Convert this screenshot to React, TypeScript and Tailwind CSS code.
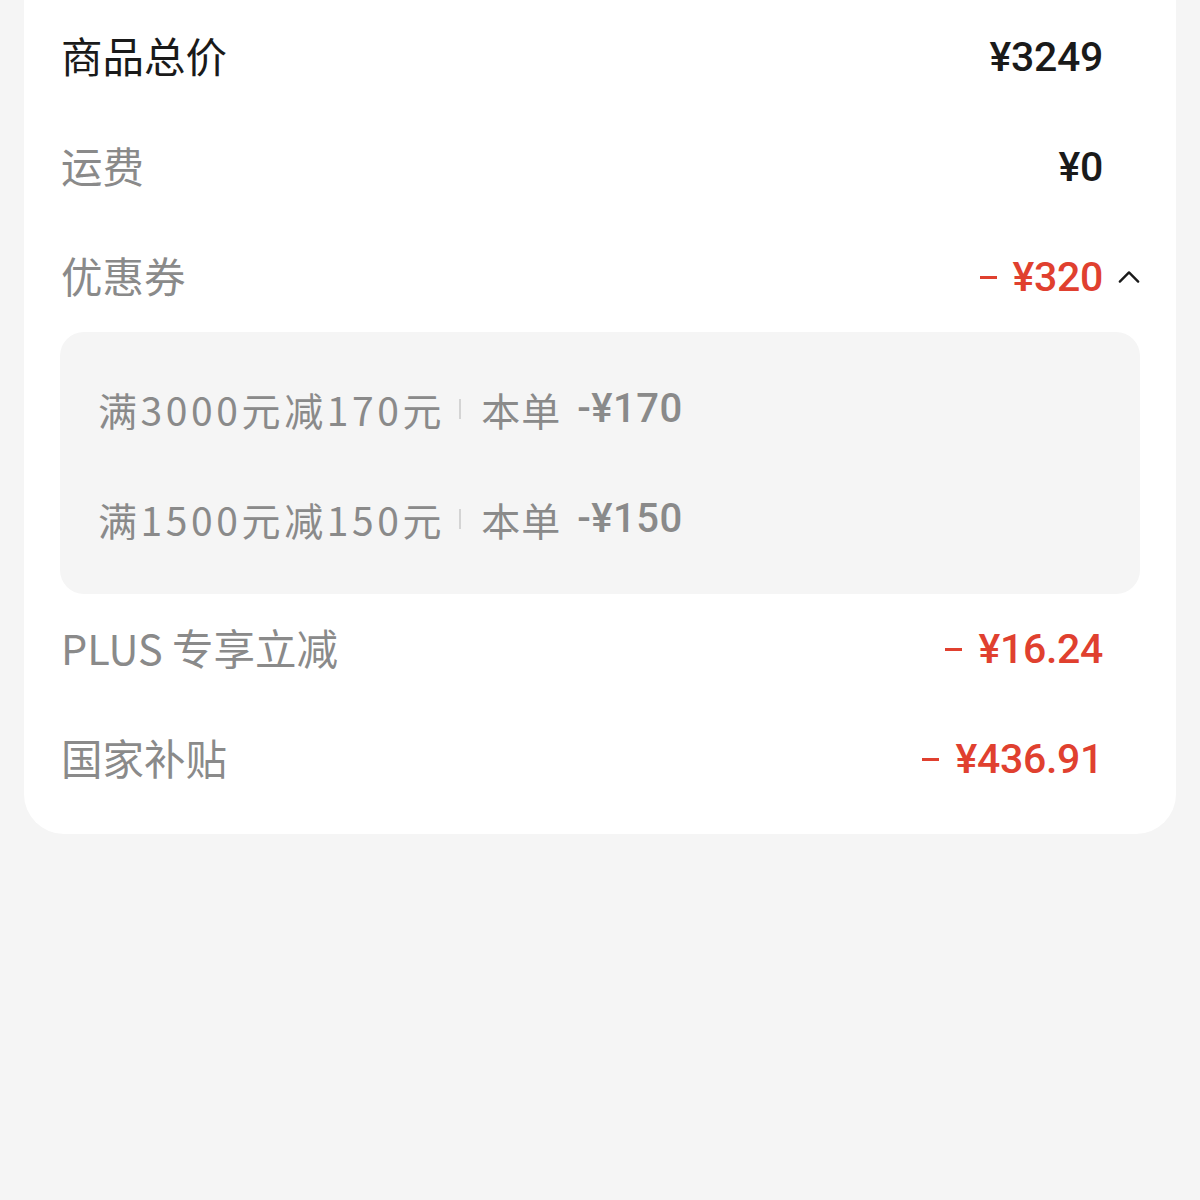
import React from "react";

const cjk = { fontFamily: '"Noto Sans CJK SC", "Noto Sans", sans-serif' };
const num = { fontFamily: 'Roboto, "Noto Sans CJK SC", sans-serif' };

function Value({ value, red }: { value: string; red?: boolean }) {
  const neg = value.startsWith("-");
  const v = neg ? value.slice(2) : value;
  return (
    <span style={num} className={`flex items-center text-[41px] leading-none font-medium tracking-[-0.3px] ${red ? "text-[#e0402f]" : "text-[#1a1a1a]"}`}>
      {neg && <span className={`inline-block w-[17px] h-[3px] mr-[16px] ${red ? "bg-[#e0402f]" : "bg-[#1a1a1a]"}`} />}
      {v}
    </span>
  );
}

function Row({ label, value, dark, red, chevron }: { label: string; value: string; dark?: boolean; red?: boolean; chevron?: boolean }) {
  return (
    <div className="h-[110px] flex items-center justify-between pl-[1px] pr-[37px]">
      <span style={cjk} className={`text-[41.5px] leading-none mt-[-3px] ${dark ? "text-[#1a1a1a]" : "text-[#8a8a8a]"}`}>{label}</span>
      <div className="flex items-center">
        <Value value={value} red={red} />
        {chevron && (
          <div className="w-[37px] mr-[-37px] pl-[15px] flex items-center">
            <svg width="24" height="14" viewBox="0 0 24 14" fill="none">
              <path d="M2 12 L12 2 L22 12" stroke="#1a1a1a" strokeWidth="2.6" strokeLinecap="round" strokeLinejoin="round" />
            </svg>
          </div>
        )}
      </div>
    </div>
  );
}

function Coupon({ cond, amt }: { cond: string; amt: string }) {
  return (
    <div className="h-[110px] flex items-center pl-[38px] text-[#8a8a8a]">
      <span style={cjk} className="text-[39px] leading-none tracking-[3.6px]">{cond}</span>
      <span className="w-[2px] h-[20px] bg-[#d4d4d4] ml-[14px] mr-[20px]" />
      <span style={cjk} className="text-[39px] leading-none tracking-[1px]">本单</span>
      <span style={num} className="text-[40px] leading-none font-medium ml-[16px] tracking-[0.5px]">{amt}</span>
    </div>
  );
}

export default function App() {
  return (
    <div className="w-[1200px] h-[1200px] bg-[#f5f5f5] overflow-hidden">
      <div className="mx-[24px] bg-white rounded-b-[40px] px-[36px] pt-[2px] pb-[20px]">
        <Row label="商品总价" value="¥3249" dark />
        <Row label="运费" value="¥0" />
        <Row label="优惠券" value="- ¥320" red chevron />
        <div className="bg-[#f5f5f5] rounded-[24px] pt-[22px] pb-[20px]">
          <Coupon cond="满3000元减170元" amt="-¥170" />
          <Coupon cond="满1500元减150元" amt="-¥150" />
        </div>
        <Row label="PLUS 专享立减" value="- ¥16.24" red />
        <Row label="国家补贴" value="- ¥436.91" red />
      </div>
    </div>
  );
}
